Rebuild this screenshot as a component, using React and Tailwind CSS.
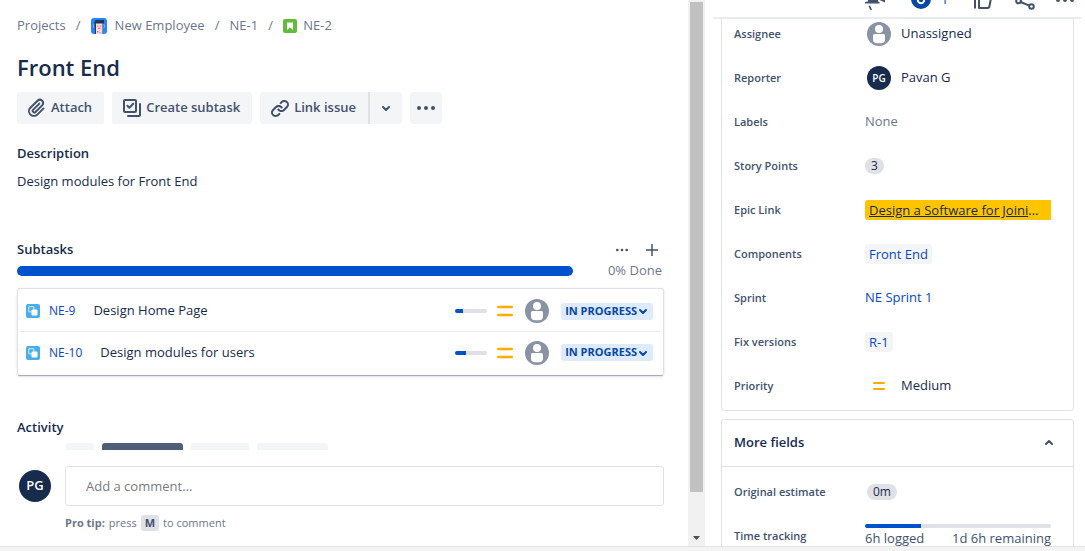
import React from "react";

const MoreIcon = ({ className }) => (
  <svg className={className} viewBox="0 0 24 24" fill="currentColor" aria-hidden="true">
    <circle cx="5" cy="12" r="2" /><circle cx="12" cy="12" r="2" /><circle cx="19" cy="12" r="2" />
  </svg>
);

const Chevron = ({ className }) => (
  <svg className={className} viewBox="0 0 24 24" fill="none" stroke="currentColor" strokeWidth="2" strokeLinecap="round" strokeLinejoin="round" aria-hidden="true">
    <path d="m9 11 3 3 3-3" />
  </svg>
);

const SmallChevron = () => (
  <svg className="size-3" viewBox="0 0 12 12" fill="none" stroke="currentColor" strokeWidth="2" strokeLinecap="round" strokeLinejoin="round" aria-hidden="true">
    <path d="m3 5 3 3 3-3" />
  </svg>
);

const AttachIcon = () => (
  <svg className="size-6" viewBox="0 0 24 24" fill="currentColor" aria-hidden="true">
    <path d="M11.643 17.965c-1.53 1.495-4.016 1.496-5.542.004a3.773 3.773 0 0 1 .002-5.412l7.147-6.985a2.316 2.316 0 0 1 3.233-.003c.893.873.895 2.282.004 3.153l-6.703 6.55a.653.653 0 0 1-.914-.008.62.62 0 0 1 0-.902l6.229-6.087a.941.941 0 0 0 0-1.353.995.995 0 0 0-1.384 0l-6.23 6.087a2.502 2.502 0 0 0 0 3.607 2.643 2.643 0 0 0 3.683.009l6.703-6.55a4.173 4.173 0 0 0-.003-6.014 4.319 4.319 0 0 0-6.002.003l-7.148 6.985a5.655 5.655 0 0 0-.001 8.118c2.29 2.237 6.015 2.238 8.308-.004l6.228-6.087a.941.941 0 0 0 0-1.353.995.995 0 0 0-1.384 0l-6.226 6.242z" />
  </svg>
);

const SubtaskIcon = () => (
  <svg className="size-6" viewBox="0 0 24 24" fill="none" stroke="currentColor" strokeWidth="2" strokeLinecap="round" strokeLinejoin="round" aria-hidden="true">
    <rect x="4" y="4" width="12" height="12" rx="1" />
    <path d="m7.4 9.8 2 2 3.8-4" />
    <path d="M20 8v11a1 1 0 0 1-1 1H8" />
  </svg>
);

const LinkIcon = () => (
  <svg className="size-6" viewBox="0 0 24 24" fill="currentColor" aria-hidden="true">
    <path d="M12.856 5.457l-.937.92a1.002 1.002 0 0 0 0 1.437 1.047 1.047 0 0 0 1.463 0l.984-.966c.967-.95 2.542-1.135 3.602-.288a2.54 2.54 0 0 1 .203 3.81l-2.903 2.852a2.646 2.646 0 0 1-3.696 0l-1.11-1.09L9 13.57l1.108 1.089c1.822 1.788 4.802 1.788 6.622 0l2.905-2.852a4.558 4.558 0 0 0-.357-6.82c-1.893-1.517-4.695-1.226-6.422.47" />
    <path d="M11.144 19.543l.937-.92a1.002 1.002 0 0 0 0-1.437 1.047 1.047 0 0 0-1.462 0l-.985.966c-.967.95-2.542 1.135-3.602.288a2.54 2.54 0 0 1-.203-3.81l2.903-2.852a2.646 2.646 0 0 1 3.696 0l1.11 1.09L15 11.43l-1.108-1.089c-1.822-1.788-4.802-1.788-6.622 0l-2.905 2.852a4.558 4.558 0 0 0 .357 6.82c1.893 1.517 4.695 1.226 6.422-.47" />
  </svg>
);

const MegaphoneIcon = () => (
  <svg className="size-6" viewBox="0 0 24 24" fill="currentColor" aria-hidden="true">
    <path d="M5 8h10v5.500l1.500.500v1.500H2V14l3-.500z" />
    <path d="M16.500 10H22v4.500L16.500 12z" />
    <path d="m5.500 18 1.600-.400 1.900 4.200-1.600.400z" />
  </svg>
);

const WatchIcon = () => (
  <svg className="size-6 shrink-0" viewBox="0 0 24 24" aria-hidden="true">
    <circle cx="12" cy="11" r="10" fill="#0747A6" />
    <circle cx="12" cy="12" r="3.200" fill="none" stroke="#fff" strokeWidth="2" />
  </svg>
);

const LikeIcon = () => (
  <svg className="size-6" viewBox="0 0 24 24" fill="none" stroke="currentColor" strokeWidth="2" strokeLinejoin="round" aria-hidden="true">
    <path d="M4 9v11.500M8 9l4-6c2 0 2 2 1 5h6a1.500 1.500 0 0 1 1 2l-1.500 8a2 2 0 0 1-2 2H8z" />
  </svg>
);

const ShareIcon = () => (
  <svg className="size-6" viewBox="0 0 24 24" fill="none" stroke="currentColor" strokeWidth="2" aria-hidden="true">
    <circle cx="5.500" cy="13" r="2.300" /><circle cx="18.500" cy="18.500" r="2.300" /><circle cx="18.500" cy="6" r="2.300" />
    <path d="m7.700 14 8.600 3.600M7.500 11.800l9-4.600" />
  </svg>
);

const ProjectAvatar = () => (
  <svg className="size-4 shrink-0" viewBox="0 0 16 16" aria-hidden="true">
    <rect width="16" height="16" rx="3" fill="#2684FF" />
    <path d="M3.300 6Q1 8 3.300 10M12.700 6Q15 8 12.700 10" stroke="#79B0FF" fill="none" />
    <path d="M3.500 4Q3.500 2 5.500 2H13v3.500h-1V16H4z" fill="#253858" />
    <path d="M5 5.500h6.500V16H5z" fill="#FBDCD8" />
    <circle cx="6.800" cy="8" r=".8" fill="#DE8A80" /><circle cx="9.800" cy="8" r=".8" fill="#DE8A80" />
    <path d="M7 9.800h2.500v1H7zM6 13h1.500v1.500H6z" fill="#F0625A" /><path d="M8 14h2.500v2H8z" fill="#B9D0F5" />
  </svg>
);

const StoryIcon = () => (
  <svg className="size-[14px] shrink-0" viewBox="0 0 14 14" aria-hidden="true">
    <rect width="14" height="14" rx="2" fill="#63BA3C" />
    <path d="M4 3.500h6V11L7 8.300 4 11z" fill="#fff" />
  </svg>
);

const SubtaskType = () => (
  <svg className="size-[14px] shrink-0" viewBox="0 0 14 14" aria-hidden="true">
    <rect width="14" height="14" rx="2" fill="#4BADE8" />
    <rect x="2.700" y="2.700" width="5.200" height="5.200" rx="1" fill="none" stroke="#B7DFF6" strokeWidth="1.300" />
    <rect x="5.500" y="5.500" width="6" height="6" rx="1" fill="#fff" />
  </svg>
);

const Person = () => (
  <svg className="size-6 shrink-0" viewBox="0 0 24 24" aria-hidden="true">
    <circle cx="12" cy="12" r="12" fill="#8993A4" />
    <circle cx="12" cy="7" r="4" fill="#fff" />
    <path d="M6 13.500A1.500 1.500 0 0 1 7.500 12h9a1.500 1.500 0 0 1 1.500 1.500v3.700a4 4 0 0 1-4 4h-4a4 4 0 0 1-4-4z" fill="#fff" />
  </svg>
);

const Medium = ({ className }) => (
  <svg className={className} viewBox="0 0 16 16" aria-hidden="true">
    <path d="M1.300 4h13.400M1.300 12h13.400" stroke="#FFAB00" strokeWidth="2.600" strokeLinecap="round" />
  </svg>
);

const Slash = () => <span className="w-[25px] text-center">/</span>;

const toolButton = "flex h-8 items-center rounded-[3px] bg-[#f4f5f7]";

function Subtask({ id, title, done }) {
  return (
    <li className="flex h-[41px] items-center border-b border-[#ebecf0] px-1.5 last:border-b-0">
      <SubtaskType />
      <a href={"#" + id} className="ml-[9px] text-[12px] text-[#0747c6]">{id}</a>
      <span className="ml-[18px] grow text-[13px]">{title}</span>
      <span className="h-1 w-8 overflow-hidden rounded-sm bg-[#dfe1e6]">
        <span className="block h-full bg-[#0052cc]" style={{ width: done + "%" }} />
      </span>
      <Medium className="mx-2.5 size-4" />
      <span className="ml-0.5"><Person /></span>
      <button className="mr-0.5 ml-3 flex h-[17px] items-center rounded-[3px] bg-[#deebff] px-1 text-[11px] font-bold text-[#0747a6]">
        IN PROGRESS
        <SmallChevron />
      </button>
    </li>
  );
}

function Main() {
  return (
    <main className="flex min-w-0 grow flex-col overflow-hidden pr-6 pl-[17px]">
      <nav aria-label="Breadcrumb" className="mt-4 flex h-5 items-center text-[13px] text-[#6b778c]">
        <a href="#projects">Projects</a>
        <Slash />
        <a href="#project" className="flex items-center gap-2"><ProjectAvatar />New Employee</a>
        <Slash />
        <a href="#NE-1">NE-1</a>
        <Slash />
        <a href="#NE-2" className="flex items-center gap-1.5"><StoryIcon />NE-2</a>
      </nav>
      <h1 className="mt-[15px] text-[22px] leading-8 font-semibold">Front End</h1>
      <div className="mt-[9px] flex gap-2 text-[13px] font-semibold text-[#42526e]">
        <button className={toolButton + " gap-0.5 pr-3 pl-2"}><AttachIcon />Attach</button>
        <button className={toolButton + " gap-0.5 pr-3 pl-2"}><SubtaskIcon />Create subtask</button>
        <div className="flex">
          <button className={toolButton + " gap-0.5 rounded-r-none pr-3 pl-2"}><LinkIcon />Link issue</button>
          <button aria-label="More link options" className={toolButton + " w-[34px] justify-center rounded-l-none border-l-2 border-[#dfe1e6]"}><Chevron className="size-6" /></button>
        </div>
        <button aria-label="More actions" className={toolButton + " w-8 justify-center"}><MoreIcon className="size-6" /></button>
      </div>
      <h2 className="mt-[19px] text-[13px] leading-5 font-semibold">Description</h2>
      <p className="mt-2 text-[13px] leading-5">Design modules for Front End</p>

      <div className="mt-[49px] flex h-5 items-center">
        <h2 className="grow text-[13px] font-semibold">Subtasks</h2>
        <button aria-label="Subtask actions" className="text-[#42526e]"><MoreIcon className="size-4" /></button>
        <button aria-label="Add subtask" className="ml-2.5 text-[#42526e]">
          <svg className="mx-1 size-4" viewBox="0 0 16 16" fill="none" stroke="currentColor" strokeWidth="1.500" aria-hidden="true"><path d="M8 2v12M2 8h12" /></svg>
        </button>
      </div>
      <div className="mt-px flex h-5 items-center justify-between">
        <span className="h-2.5 w-[86%] rounded-full bg-[#0052cc]" />
        <span className="pr-0.5 text-[13px] text-[#6b778c]">0% Done</span>
      </div>
      <ul className="mt-[7px] rounded-[3px] border border-[#dfe1e6] border-b-[#a5adba] px-0.5 py-0.5 shadow-sm">
        <Subtask id="NE-9" title="Design Home Page" done={25} />
        <Subtask id="NE-10" title="Design modules for users" done={34} />
      </ul>

      <h2 className="mt-[41px] text-[13px] leading-5 font-semibold">Activity</h2>
      <div className="mt-1.5 flex h-[7px] shrink-0 gap-2 pl-[49px]" aria-hidden="true">
        <span className="w-7 rounded-t-[3px] bg-[#f4f5f7]" />
        <span className="w-[81px] rounded-t-[3px] bg-[#505f79]" />
        <span className="w-[58px] rounded-t-[3px] bg-[#f4f5f7]" />
        <span className="w-[71px] rounded-t-[3px] bg-[#f4f5f7]" />
      </div>
      <div className="mt-4 flex">
        <span className="mt-1 mr-3.5 ml-0.5 grid size-8 shrink-0 place-items-center rounded-full bg-[#172b4d] text-[13px] font-semibold text-white">PG</span>
        <div className="grow">
          <input aria-label="Add a comment" placeholder="Add a comment…" className="block h-10 w-full rounded-[3px] border border-[#dfe1e6] px-5 text-[13px] placeholder:text-[#7a7a7a]" />
          <p className="mt-2 flex h-[18px] items-center gap-1 text-[11px] text-[#6b778c]">
            <b>Pro tip:</b> press <kbd className="rounded-[3px] bg-[#dfe1e6] px-1 font-[inherit] leading-4 font-bold text-[#42526e]">M</kbd> to comment
          </p>
        </div>
      </div>
    </main>
  );
}

function ScrollTrack() {
  return (
    <div className="flex w-[17px] shrink-0 flex-col items-center bg-[#f1f1f1] pt-0.5" aria-hidden="true">
      <div className="w-[13px] grow bg-[#c1c1c1]" />
      <svg className="mt-11 mb-1.5 h-1 w-[7px]" viewBox="0 0 7 4"><path d="M0 0h7L3.500 4z" fill="#505050" /></svg>
    </div>
  );
}

function Field({ label, children }) {
  return (
    <div className="flex h-11 items-center">
      <dt className="w-[131px] shrink-0 text-[11px] font-semibold text-[#42526e]">{label}</dt>
      <dd className="flex min-w-0 grow items-center text-[13px]">{children}</dd>
    </div>
  );
}

const chip = "rounded-[3px] bg-[#f4f5f7] px-1 leading-5 text-[#0747c6]";
const pill = "rounded-full bg-[#dfe1e6] px-1.5 text-[12px] leading-4";

function Details() {
  return (
    <aside className="flex w-[380px] shrink-0 flex-col overflow-hidden pl-2">
      <header className="mr-1 flex h-[19px] shrink-0 items-end justify-end gap-2 overflow-hidden border-b-2 border-[#ebecf0] pb-[5px] text-[#42526e]">
        <button aria-label="Give feedback" className="flex w-8 justify-center"><MegaphoneIcon /></button>
        <button aria-label="Watchers" className="flex w-[60px] items-center gap-2 pl-2.5 text-[13px] text-[#0747a6]"><WatchIcon />1</button>
        <button aria-label="Like" className="mr-0.5 flex w-8 justify-center"><LikeIcon /></button>
        <button aria-label="Share" className="flex w-8 justify-center"><ShareIcon /></button>
        <button aria-label="Actions" className="flex w-8 justify-center"><MoreIcon className="size-6" /></button>
      </header>
      <div className="mr-[11px] ml-2 min-h-0 grow overflow-hidden">
        <dl className="-mt-2 rounded-b-[3px] border border-[#dfe1e6] pr-[22px] pb-0.5 pl-3">
          <Field label="Assignee"><span className="ml-0.5 flex items-center gap-2.5"><Person />Unassigned</span></Field>
          <Field label="Reporter">
            <span className="ml-0.5 flex items-center gap-2.5">
              <span className="grid size-6 place-items-center rounded-full bg-[#172b4d] text-[10px] font-semibold text-white">PG</span>
              Pavan G
            </span>
          </Field>
          <Field label="Labels"><span className="text-[#6b778c]">None</span></Field>
          <Field label="Story Points"><span className={pill}>3</span></Field>
          <Field label="Epic Link"><a href="#epic" className="block w-full rounded-l-[3px] bg-[#ffc400] px-1 leading-5 whitespace-nowrap"><span className="underline">Design a Software for Joini</span>…</a></Field>
          <Field label="Components"><a href="#component" className={chip}>Front End</a></Field>
          <Field label="Sprint"><a href="#sprint" className="text-[#0747c6]">NE Sprint 1</a></Field>
          <Field label="Fix versions"><a href="#release" className={chip}>R-1</a></Field>
          <Field label="Priority"><span className="ml-2 flex items-center gap-4"><Medium className="h-3 w-3" />Medium</span></Field>
        </dl>
        <section className="mt-2 rounded-[3px] border border-[#dfe1e6]">
          <h2>
            <button aria-expanded="true" className="flex h-[47px] w-full items-center justify-between border-b border-[#dfe1e6] px-3 text-[13px] font-semibold">
              More fields
              <Chevron className="size-6 rotate-180 text-[#42526e]" />
            </button>
          </h2>
          <dl className="pt-[3px] pr-[22px] pl-3">
            <Field label="Original estimate"><span className={pill + " ml-0.5"}>0m</span></Field>
            <Field label="Time tracking">
              <div className="grow text-[#42526e]">
                <div className="h-1 overflow-hidden rounded-sm bg-[#dfe1e6]"><div className="h-full w-[30%] bg-[#0052cc]" /></div>
                <div className="flex justify-between leading-5"><span>6h logged</span><span>1d 6h remaining</span></div>
              </div>
            </Field>
          </dl>
        </section>
      </div>
    </aside>
  );
}

export default function App() {
  return (
    <div className="flex h-screen flex-col overflow-hidden bg-white font-['Open_Sans',sans-serif] text-[#172b4d]">
      <div className="flex min-h-0 grow"><Main /><ScrollTrack /><Details /></div>
      <div className="h-[5px] shrink-0 border-t border-[#e3e3e3] bg-[#f3f3f3]" />
    </div>
  );
}
